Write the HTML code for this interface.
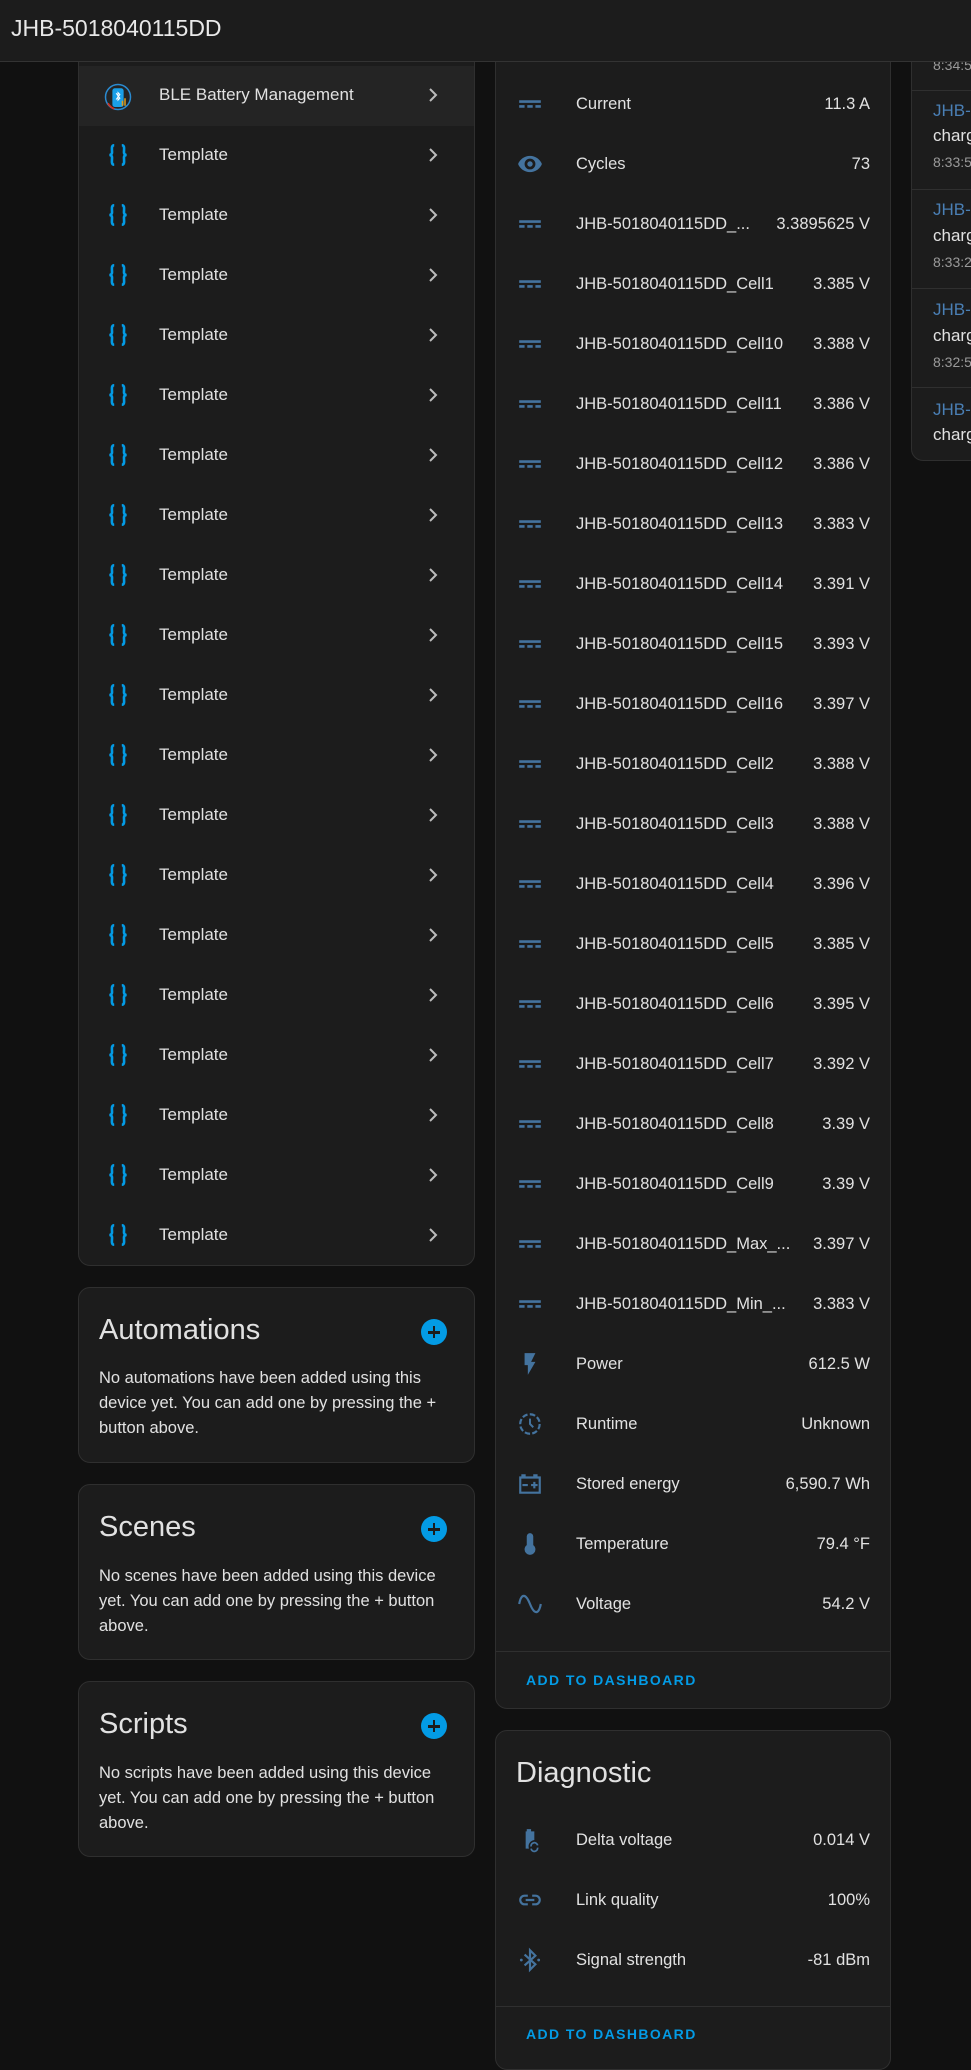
<!DOCTYPE html>
<html><head><meta charset="utf-8"><style>
*{box-sizing:border-box;margin:0;padding:0}
body{width:971px;height:2044px;background:#111111;font-family:"Liberation Sans",sans-serif;color:#e1e1e1;position:relative;overflow:hidden}
.abs{position:absolute}
.hdr{left:0;top:0;width:971px;height:62px;background:#1c1c1c;border-bottom:1px solid #333;font-size:23px;line-height:56px;padding-left:11px;color:#e8e8e8;z-index:5}
.card{position:absolute;background:#1c1c1c;border:1px solid #2f2f2f;border-radius:12px}
.row{position:absolute;height:60px;line-height:60px;font-size:17px}
.ic{position:absolute;width:26px;height:26px}
.val{position:absolute;right:0;text-align:right}
.title{position:absolute;font-size:29px;color:#e1e1e1}
.txt{position:absolute;font-size:16.5px;line-height:25px;color:#e1e1e1}
.plus{position:absolute;width:26px;height:26px;border-radius:50%;background:#039be5}
.plus:before{content:"";position:absolute;left:7px;top:12px;width:12px;height:2.5px;background:#1c1c1c}
.plus:after{content:"";position:absolute;left:11.75px;top:7px;width:2.5px;height:12px;background:#1c1c1c}
.add{position:absolute;font-size:14px;font-weight:bold;letter-spacing:1.4px;color:#039be5}
</style></head><body>
<div class="abs hdr">JHB-5018040115DD</div>

<div class="card" style="left:78px;top:20px;width:397px;height:1246px;border-top-left-radius:0;border-top-right-radius:0"></div>
<div class="abs" style="left:79px;top:66px;width:395px;height:60px;background:#242424"></div>

<div class="card" style="left:78px;top:1287px;width:397px;height:176px"></div>
<div class="title" style="left:99px;top:1314px">Automations</div>
<div class="plus" style="left:421px;top:1319px"></div>
<div class="txt" style="left:99px;top:1366px">No automations have been added using this<br>device yet. You can add one by pressing the +<br>button above.</div>

<div class="card" style="left:78px;top:1484px;width:397px;height:176px"></div>
<div class="title" style="left:99px;top:1511px">Scenes</div>
<div class="plus" style="left:421px;top:1516px"></div>
<div class="txt" style="left:99px;top:1564px">No scenes have been added using this device<br>yet. You can add one by pressing the + button<br>above.</div>

<div class="card" style="left:78px;top:1681px;width:397px;height:176px"></div>
<div class="title" style="left:99px;top:1708px">Scripts</div>
<div class="plus" style="left:421px;top:1713px"></div>
<div class="txt" style="left:99px;top:1761px">No scripts have been added using this device<br>yet. You can add one by pressing the + button<br>above.</div>

<div class="card" style="left:495px;top:20px;width:396px;height:1689px;border-top-left-radius:0;border-top-right-radius:0"></div>
<div class="abs" style="left:496px;top:1651px;width:394px;height:1px;background:#2f2f2f"></div>
<div class="add" style="left:526px;top:1672px">ADD TO DASHBOARD</div>

<div class="card" style="left:495px;top:1730px;width:396px;height:340px"></div>
<div class="title" style="left:516px;top:1757px">Diagnostic</div>
<div class="abs" style="left:496px;top:2006px;width:394px;height:1px;background:#2f2f2f"></div>
<div class="add" style="left:526px;top:2026px">ADD TO DASHBOARD</div>

<div class="card" style="left:911px;top:20px;width:100px;height:441px;border-top-left-radius:0"></div>
<div class="abs" style="left:912px;top:90px;width:60px;height:1px;background:#2f2f2f"></div>
<div class="abs" style="left:912px;top:189px;width:60px;height:1px;background:#2f2f2f"></div>
<div class="abs" style="left:912px;top:288px;width:60px;height:1px;background:#2f2f2f"></div>
<div class="abs" style="left:912px;top:387px;width:60px;height:1px;background:#2f2f2f"></div>
<div class="abs" style="left:933px;top:57px;font-size:14px;color:#9a9a9a">8:34:5</div>
<div class="abs" style="left:933px;top:101px;font-size:17px;color:#4a7fb5">JHB-</div>
<div class="abs" style="left:933px;top:126px;font-size:17px">charg</div>
<div class="abs" style="left:933px;top:154px;font-size:14px;color:#9a9a9a">8:33:5</div>
<div class="abs" style="left:933px;top:200px;font-size:17px;color:#4a7fb5">JHB-</div>
<div class="abs" style="left:933px;top:226px;font-size:17px">charg</div>
<div class="abs" style="left:933px;top:254px;font-size:14px;color:#9a9a9a">8:33:2</div>
<div class="abs" style="left:933px;top:300px;font-size:17px;color:#4a7fb5">JHB-</div>
<div class="abs" style="left:933px;top:326px;font-size:17px">charg</div>
<div class="abs" style="left:933px;top:354px;font-size:14px;color:#9a9a9a">8:32:5</div>
<div class="abs" style="left:933px;top:400px;font-size:17px;color:#4a7fb5">JHB-</div>
<div class="abs" style="left:933px;top:425px;font-size:17px">charg</div>

<svg width="0" height="0" style="position:absolute">
<defs>
<symbol id="dc" viewBox="0 0 24 24"><path fill="#44739e" d="M2 8.5H22V11H2ZM2 13H7V15.5H2ZM9.5 13H14.5V15.5H9.5ZM17 13H22V15.5H17Z"/></symbol>
<symbol id="eye" viewBox="0 0 24 24"><path fill="#44739e" fill-rule="evenodd" d="M12 4.5C7 4.5 2.7 7.6 1 12C2.7 16.4 7 19.5 12 19.5S21.3 16.4 23 12C21.3 7.6 17 4.5 12 4.5ZM12 17A5 5 0 1 1 12 7A5 5 0 1 1 12 17ZM12 9.5A2.5 2.5 0 1 0 12 14.5A2.5 2.5 0 1 0 12 9.5Z"/></symbol>
<symbol id="flash" viewBox="0 0 24 24"><path fill="#44739e" d="M7 2V13H10V22L17 10H13L17 2Z"/></symbol>
<symbol id="clock" viewBox="0 0 24 24"><path fill="none" stroke="#44739e" stroke-width="2" stroke-dasharray="5 2" d="M12 3A9 9 0 1 1 11.9 3"/><path fill="none" stroke="#44739e" stroke-width="1.8" d="M12 7V12L15 15"/></symbol>
<symbol id="bat" viewBox="0 0 24 24"><path fill="#44739e" d="M4 5H8V3H4ZM15 5H19V3H15ZM2 5H22V21H2ZM4 7V19H20V7ZM5 12H10V14H5ZM13 12H15V10H17V12H19V14H17V16H15V14H13Z" fill-rule="evenodd"/></symbol>
<symbol id="therm" viewBox="0 0 24 24"><path fill="#44739e" d="M15 13V5A3 3 0 0 0 9 5V13A5 5 0 1 0 15 13Z"/></symbol>
<symbol id="sine" viewBox="0 0 24 24"><path fill="none" stroke="#44739e" stroke-width="2" d="M2 12C4 2 8 2 12 12S20 22 22 12"/></symbol>
<symbol id="braces" viewBox="0 0 24 24"><path fill="none" stroke="#039be5" stroke-width="2.4" d="M8.5 3C5.5 3 6.5 7 6.5 9.5S4 12 4 12S6.5 12 6.5 14.5S5.5 21 8.5 21M15.5 3C18.5 3 17.5 7 17.5 9.5S20 12 20 12S17.5 12 17.5 14.5S18.5 21 15.5 21"/></symbol>
<symbol id="chev" viewBox="0 0 24 24"><path fill="none" stroke="#bbb" stroke-width="2" d="M9 6L15 12L9 18"/></symbol>
<symbol id="batsync" viewBox="0 0 24 24"><path fill="#44739e" d="M9 2H13V4H16V12A6 6 0 0 0 11 20H8V4H9Z"/><path fill="none" stroke="#44739e" stroke-width="1.6" d="M13 18A3 3 0 0 1 19 17M19 19A3 3 0 0 1 13 20"/></symbol>
<symbol id="link" viewBox="0 0 24 24"><path fill="none" stroke="#44739e" stroke-width="2" d="M10 8H7A4 4 0 0 0 7 16H10M14 8H17A4 4 0 0 1 17 16H14M8 12H16"/></symbol>
<symbol id="bt" viewBox="0 0 24 24"><path fill="none" stroke="#44739e" stroke-width="2" d="M7 7L17 16L12 21V3L17 8L7 17"/><circle cx="4" cy="12" r="1.3" fill="#44739e"/><circle cx="20" cy="12" r="1.3" fill="#44739e"/></symbol>
<symbol id="ble" viewBox="0 0 24 24"><circle cx="12" cy="12" r="10" fill="none" stroke="#2a8ad0" stroke-width="1.2"/><rect x="7.5" y="5" width="9" height="15" rx="2" fill="#1aa0e8"/><path d="M10.5 9L13.5 13L12 14.5V8.5L13.5 10L10.5 14" fill="none" stroke="#fff" stroke-width=".8"/><rect x="15" y="15" width="1.2" height="4" fill="#e0a020"/><rect x="17" y="13" width="1.2" height="6" fill="#e0a020"/><path d="M4 17A10 10 0 0 0 9 21.5" stroke="#d03020" stroke-width="1.4" fill="none"/></symbol>
</defs></svg>

<script>
function el(h){document.body.insertAdjacentHTML('beforeend',h)}
el('<svg class="ic" style="left:103px;top:82px;width:30px;height:30px"><use href="#ble"/></svg><div class="row" style="left:159px;top:65px">BLE Battery Management</div><svg class="ic" style="left:421px;top:83px;width:24px;height:24px"><use href="#chev"/></svg>');
for(let i=0;i<19;i++){let c=155+60*i;
el('<svg class="ic" style="left:105px;top:'+(c-13)+'px"><use href="#braces"/></svg><div class="row" style="left:159px;top:'+(c-30)+'px">Template</div><svg class="ic" style="left:421px;top:'+(c-12)+'px;width:24px;height:24px"><use href="#chev"/></svg>');}
const m=[["dc","Current","11.3 A"],["eye","Cycles","73"],["dc","JHB-5018040115DD_...","3.3895625 V"],["dc","JHB-5018040115DD_Cell1","3.385 V"],["dc","JHB-5018040115DD_Cell10","3.388 V"],["dc","JHB-5018040115DD_Cell11","3.386 V"],["dc","JHB-5018040115DD_Cell12","3.386 V"],["dc","JHB-5018040115DD_Cell13","3.383 V"],["dc","JHB-5018040115DD_Cell14","3.391 V"],["dc","JHB-5018040115DD_Cell15","3.393 V"],["dc","JHB-5018040115DD_Cell16","3.397 V"],["dc","JHB-5018040115DD_Cell2","3.388 V"],["dc","JHB-5018040115DD_Cell3","3.388 V"],["dc","JHB-5018040115DD_Cell4","3.396 V"],["dc","JHB-5018040115DD_Cell5","3.385 V"],["dc","JHB-5018040115DD_Cell6","3.395 V"],["dc","JHB-5018040115DD_Cell7","3.392 V"],["dc","JHB-5018040115DD_Cell8","3.39 V"],["dc","JHB-5018040115DD_Cell9","3.39 V"],["dc","JHB-5018040115DD_Max_...","3.397 V"],["dc","JHB-5018040115DD_Min_...","3.383 V"],["flash","Power","612.5 W"],["clock","Runtime","Unknown"],["bat","Stored energy","6,590.7 Wh"],["therm","Temperature","79.4 °F"],["sine","Voltage","54.2 V"]];
function rows(list,start){list.forEach((r,i)=>{let c=start+60*i;
el('<svg class="ic" style="left:517px;top:'+(c-13)+'px"><use href="#'+r[0]+'"/></svg><div class="row" style="left:576px;top:'+(c-30)+'px;width:294px;font-size:16.5px;white-space:nowrap"><span>'+r[1]+'</span><span class="val">'+r[2]+'</span></div>');});}
rows(m,104);
rows([["batsync","Delta voltage","0.014 V"],["link","Link quality","100%"],["bt","Signal strength","-81 dBm"]],1840);
</script>
</body></html>
